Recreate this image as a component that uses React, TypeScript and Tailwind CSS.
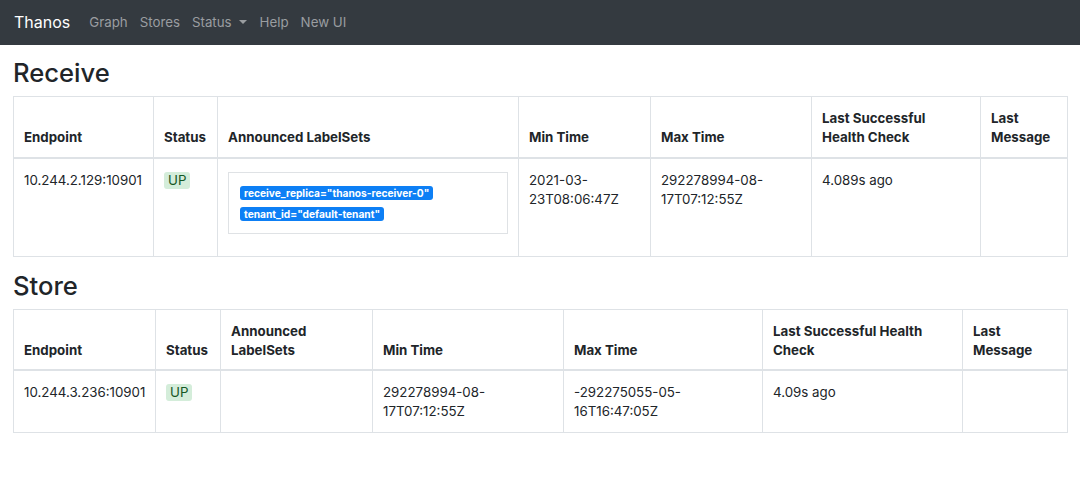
// --- data ---
interface Row {
  endpoint: string;
  labels: string[][];
  minTime: string[];
  maxTime: string[];
  lastCheck: string;
}

const receiveRows: Row[] = [
  {
    endpoint: '10.244.2.129:10901',
    labels: [['receive_replica="thanos-receiver-0"', 'tenant_id="default-tenant"']],
    minTime: ['2021-03-', '23T08:06:47Z'],
    maxTime: ['292278994-08-', '17T07:12:55Z'],
    lastCheck: '4.089s ago',
  },
];

const storeRows: Row[] = [
  {
    endpoint: '10.244.3.236:10901',
    labels: [],
    minTime: ['292278994-08-', '17T07:12:55Z'],
    maxTime: ['-292275055-05-', '16T16:47:05Z'],
    lastCheck: '4.09s ago',
  },
];

const th = 'border border-[#dee2e6] border-b-2 px-[10px] py-[9px] align-bottom text-left font-bold';
const td = 'border border-[#dee2e6] px-[10px] pt-[12px] pb-[11px] align-top';

function UpBadge() {
  return (
    <span className="inline-block rounded-[3px] bg-[#d4edda] px-[4px] leading-[17px] text-[#155724]">UP</span>
  );
}

function StoreTable({ rows, widths, header }: { rows: Row[]; widths: string[]; header: string[][] }) {
  return (
    <table className="w-full border-collapse table-fixed">
      <colgroup>
        {widths.map((w, i) => (
          <col key={i} className={w} />
        ))}
      </colgroup>
      <thead>
        <tr className="h-[61px]">
          {header.map((h, i) => (
            <th key={i} className={th}>
              {h.map((line, j) => (
                <div key={j}>{line}</div>
              ))}
            </th>
          ))}
        </tr>
      </thead>
      <tbody>
        {rows.map((r) => (
          <tr key={r.endpoint}>
            <td className={td}>{r.endpoint}</td>
            <td className={td}>
              <UpBadge />
            </td>
            <td className={td}>
              {r.labels.map((set, i) => (
                <div key={i} className="mt-[1px] mb-[11px] border border-[#dfe2e5] px-[11px] pt-[13px] pb-[12px]">
                  {set.map((l) => (
                    <div key={l} className="mb-[7px] last:mb-0 leading-none">
                      <span className="inline-block rounded-[3px] bg-[#0d7ff5] px-[4px] py-[2px] text-[10.2px] font-bold leading-[10px] text-white">
                        {l}
                      </span>
                    </div>
                  ))}
                </div>
              ))}
            </td>
            <td className={td}>
              {r.minTime.map((t) => (
                <div key={t}>{t}</div>
              ))}
            </td>
            <td className={td}>
              {r.maxTime.map((t) => (
                <div key={t}>{t}</div>
              ))}
            </td>
            <td className={td}>{r.lastCheck}</td>
            <td className={td}></td>
          </tr>
        ))}
      </tbody>
    </table>
  );
}

function App() {
  return (
    <div className="min-h-screen bg-white text-[13.3px] leading-[19.2px] text-[#212529] font-['Inter','Liberation_Sans',sans-serif]">
      {/* navbar */}
      <nav className="flex h-[45px] items-center bg-[#343a40] px-[14px]">
        <span className="mr-[19px] text-[16px] text-white">Thanos</span>
        <div className="flex items-center gap-[12px] text-[#9a9da0]">
          <span>Graph</span>
          <span>Stores</span>
          <span className="flex items-center gap-[3px]">
            Status
            <svg width="10" height="6" viewBox="0 0 10 6" className="ml-[3px]">
              <path d="M1 1 L5 5 L9 1 Z" fill="#9a9da0" />
            </svg>
          </span>
          <span>Help</span>
          <span>New UI</span>
        </div>
      </nav>

      <div className="px-[13px] pt-[12px]">
        <h2 className="mb-[8px] text-[25.6px] leading-[31px] font-medium">Receive</h2>
        <StoreTable
          rows={receiveRows}
          widths={['w-[140px]', 'w-[64px]', 'w-[301px]', 'w-[132px]', 'w-[161px]', 'w-[169px]', 'w-[87px]']}
          header={[['Endpoint'], ['Status'], ['Announced LabelSets'], ['Min Time'], ['Max Time'], ['Last Successful', 'Health Check'], ['Last', 'Message']]}
        />
        <h2 className="mt-[13px] mb-[8px] text-[25.6px] leading-[31px] font-medium">Store</h2>
        <StoreTable
          rows={storeRows}
          widths={['w-[142px]', 'w-[65px]', 'w-[152px]', 'w-[191px]', 'w-[199px]', 'w-[200px]', 'w-[105px]']}
          header={[['Endpoint'], ['Status'], ['Announced', 'LabelSets'], ['Min Time'], ['Max Time'], ['Last Successful Health', 'Check'], ['Last', 'Message']]}
        />
      </div>
    </div>
  );
}

export default App;
